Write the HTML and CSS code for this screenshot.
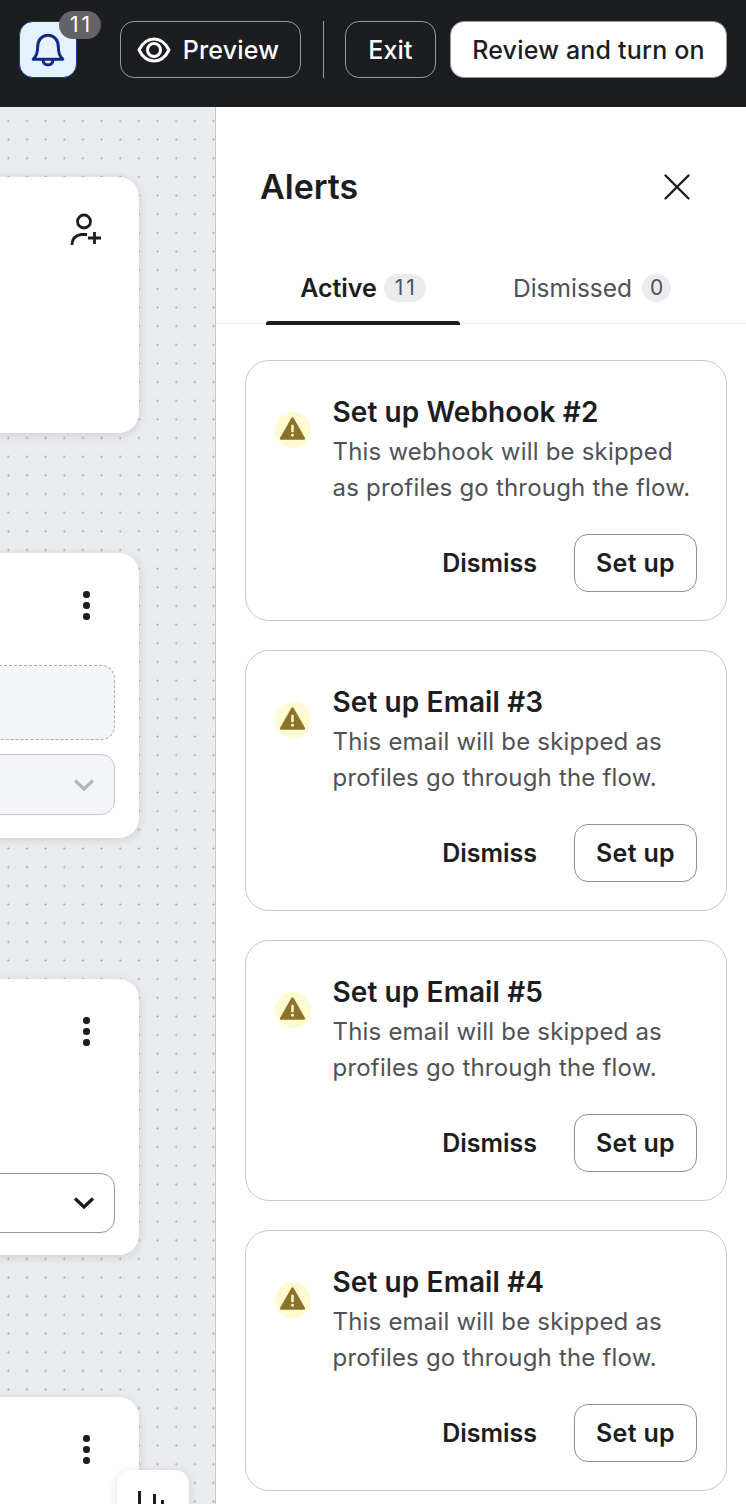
FILE: index.html
```html
<!DOCTYPE html>
<html lang="en">
<head>
<meta charset="UTF-8">
<title>Flow builder alerts</title>
<link rel="stylesheet" href="styles.css">
</head>
<body>
<header class="topbar">
  <div class="bell-wrap">
    <button class="bell-btn">
      <svg width="42" height="42" viewBox="0 2 34 34" fill="none" stroke="#0f2c84" stroke-width="2.400" stroke-linejoin="round" stroke-linecap="round"><path d="M5 26.500c2.800-2.600 3.600-5 3.600-9.500C8.600 11 12 7 17 7s8.400 4 8.400 10c0 4.500 .8 6.900 3.600 9.500Z"/><path d="M13 27c0 2.600 1.800 4 4 4s4-1.400 4-4"/></svg>
    </button>
    <span class="bell-count">11</span>
  </div>
  <button class="btn-dark btn-preview">
    <svg width="36" height="36" viewBox="0 0 36 36" fill="none" stroke="#fff" stroke-width="3" stroke-linejoin="round"><path d="M3 18C6.500 11 11.500 7 18 7s11.500 4 15 11c-3.500 7-8.500 11-15 11S6.500 25 3 18Z"/><circle cx="18" cy="18" r="6.500"/></svg>
    Preview
  </button>
  <span class="divider"></span>
  <button class="btn-dark btn-exit">Exit</button>
  <button class="btn-light">Review and turn on</button>
</header>

<main class="workspace">
  <section class="canvas">
    <div class="node node-trigger">
      <svg class="node-icon" width="34" height="34" viewBox="0 0 34 34" fill="none" stroke="#1c1d20" stroke-width="2.800"><circle cx="15" cy="9.500" r="6.500"/><path d="M3 33c0-6 3-9.500 9-10.500h6"/><path d="M19 26h13M25.500 20v12"/></svg>
    </div>
    <div class="node node-email">
      <div class="menu-dots"><i></i><i></i><i></i></div>
      <div class="placeholder"></div>
      <div class="select select-off">
        <svg width="22" height="14" viewBox="0 0 22 14" fill="none" stroke="#b4b5bb" stroke-width="3.200"><path d="M2 2.500l9 8.500 9-8.500"/></svg>
      </div>
    </div>
    <div class="node node-webhook">
      <div class="menu-dots"><i></i><i></i><i></i></div>
      <div class="select select-on">
        <svg width="22" height="14" viewBox="0 0 22 14" fill="none" stroke="#1c1d20" stroke-width="3.200"><path d="M2 2.500l9 8.500 9-8.500"/></svg>
      </div>
    </div>
    <div class="node node-last">
      <div class="menu-dots"><i></i><i></i><i></i></div>
    </div>
    <div class="zoom-tool">
      <span class="bar bar-a"></span><span class="bar bar-b"></span><span class="bar bar-c"></span>
    </div>
  </section>

  <aside class="panel">
    <div class="panel-head">
      <h1>Alerts</h1>
      <svg width="28" height="28" viewBox="0 0 28 28" fill="none" stroke="#1c1d20" stroke-width="2.400" stroke-linecap="round"><path d="M2.500 2.500l23 23M25.500 2.500l-23 23"/></svg>
    </div>
    <nav class="tabs">
      <div class="tab tab-active">Active <span class="pill pill-wide">11</span></div>
      <div class="tab">Dismissed <span class="pill">0</span></div>
    </nav>
    <div class="alerts">
      <article class="alert">
        <span class="warn"><svg width="25" height="23" viewBox="0 0 26 24"><path d="M13 1.500 25 22.500H1Z" fill="#8c722b" stroke="#8c722b" stroke-width="2.500" stroke-linejoin="round"/><rect x="11.700" y="8" width="2.600" height="8" rx="1" fill="#fffbd0"/><circle cx="13" cy="19" r="1.500" fill="#fffbd0"/></svg></span>
        <div class="alert-body">
          <h2>Set up Webhook #2</h2>
          <p>This webhook will be skipped as profiles go through the flow.</p>
          <div class="alert-actions"><span class="dismiss">Dismiss</span><button class="setup">Set up</button></div>
        </div>
      </article>
      <article class="alert">
        <span class="warn"><svg width="25" height="23" viewBox="0 0 26 24"><path d="M13 1.500 25 22.500H1Z" fill="#8c722b" stroke="#8c722b" stroke-width="2.500" stroke-linejoin="round"/><rect x="11.700" y="8" width="2.600" height="8" rx="1" fill="#fffbd0"/><circle cx="13" cy="19" r="1.500" fill="#fffbd0"/></svg></span>
        <div class="alert-body">
          <h2>Set up Email #3</h2>
          <p>This email will be skipped as profiles go through the flow.</p>
          <div class="alert-actions"><span class="dismiss">Dismiss</span><button class="setup">Set up</button></div>
        </div>
      </article>
      <article class="alert">
        <span class="warn"><svg width="25" height="23" viewBox="0 0 26 24"><path d="M13 1.500 25 22.500H1Z" fill="#8c722b" stroke="#8c722b" stroke-width="2.500" stroke-linejoin="round"/><rect x="11.700" y="8" width="2.600" height="8" rx="1" fill="#fffbd0"/><circle cx="13" cy="19" r="1.500" fill="#fffbd0"/></svg></span>
        <div class="alert-body">
          <h2>Set up Email #5</h2>
          <p>This email will be skipped as profiles go through the flow.</p>
          <div class="alert-actions"><span class="dismiss">Dismiss</span><button class="setup">Set up</button></div>
        </div>
      </article>
      <article class="alert">
        <span class="warn"><svg width="25" height="23" viewBox="0 0 26 24"><path d="M13 1.500 25 22.500H1Z" fill="#8c722b" stroke="#8c722b" stroke-width="2.500" stroke-linejoin="round"/><rect x="11.700" y="8" width="2.600" height="8" rx="1" fill="#fffbd0"/><circle cx="13" cy="19" r="1.500" fill="#fffbd0"/></svg></span>
        <div class="alert-body">
          <h2>Set up Email #4</h2>
          <p>This email will be skipped as profiles go through the flow.</p>
          <div class="alert-actions"><span class="dismiss">Dismiss</span><button class="setup">Set up</button></div>
        </div>
      </article>
    </div>
  </aside>
</main>
</body>
</html>
```

FILE: styles.css
```css
* {
  box-sizing: border-box;
  font-family: Inter, "Noto Sans", sans-serif;
}
html, body {
  margin: 0;
  height: 1504px;
  overflow: hidden;
}
button {
  margin: 0;
  padding: 0;
  background: none;
  border: none;
  color: inherit;
  font-size: inherit;
  font-weight: inherit;
  letter-spacing: inherit;
}

/* top bar */
.topbar {
  display: flex;
  align-items: flex-start;
  height: 107px;
  padding: 21px 19px 0 19px;
  background-color: #1c1d20;
  color: #fff;
  font-size: 25px;
  font-weight: 500;
  letter-spacing: 0.2px;
}
.bell-wrap {
  position: relative;
  width: 58px;
  height: 57px;
  margin-right: 43px;
}
.bell-btn {
  display: flex;
  align-items: center;
  justify-content: center;
  width: 58px;
  height: 57px;
  background-color: #e4f1ff;
  border: 1.500px solid #1a3a9c;
  border-radius: 14px;
}
.bell-count {
  position: absolute;
  left: 40px;
  top: -10px;
  width: 42px;
  height: 28px;
  background-color: #636366;
  border-radius: 14px;
  font-size: 21px;
  font-weight: 400;
  line-height: 28px;
  letter-spacing: 3px;
  text-indent: 3px;
  text-align: center;
}
.btn-dark {
  display: flex;
  align-items: center;
  justify-content: center;
  height: 57px;
  border: 1px solid #98999d;
  border-radius: 14px;
}
.btn-preview {
  gap: 11px;
  width: 181px;
  padding-right: 6px;
}
.divider {
  width: 1px;
  height: 57px;
  margin: 0 21px 0 22px;
  background-color: #98999d;
}
.btn-exit {
  width: 91px;
  margin-right: 14px;
}
.btn-light {
  width: 277px;
  height: 57px;
  background-color: #fff;
  color: #1c1d20;
  border: 1px solid #98999d;
  border-radius: 14px;
}

/* flow canvas */
.workspace {
  display: flex;
  height: 1397px;
}
.canvas {
  position: relative;
  width: 216px;
  overflow: hidden;
  background-color: #ebecef;
  background-image: radial-gradient(circle, #a9aab0 0.800px, transparent 1.300px);
  background-size: 18.667px 18.667px;
  background-position: -1px 4.600px;
  border-right: 1px solid #c8c9d0;
}
.node {
  position: absolute;
  left: -100px;
  width: 239px;
  background-color: #fff;
  border-radius: 20px;
  box-shadow: 0 2px 10px rgba(28, 29, 32, 0.14);
}
.node-trigger {
  top: 70px;
  height: 256px;
}
.node-email {
  top: 446px;
  height: 285px;
}
.node-webhook {
  top: 872px;
  height: 276px;
}
.node-last {
  top: 1290px;
  height: 300px;
}
.node-icon {
  position: absolute;
  left: 169px;
  top: 35px;
}
.menu-dots {
  position: absolute;
  left: 183px;
  top: 38px;
  display: flex;
  flex-direction: column;
  gap: 4.500px;
}
.menu-dots i {
  display: block;
  width: 6.500px;
  height: 6.500px;
  background-color: #1c1d20;
  border-radius: 50%;
}
.placeholder {
  position: absolute;
  left: 0;
  top: 112px;
  width: 215px;
  height: 75px;
  background-color: #f4f5f7;
  border: 1px dashed #a9aab0;
  border-radius: 14px;
}
.select {
  position: absolute;
  left: 0;
  width: 215px;
  height: 61px;
  border-radius: 14px;
  display: flex;
  align-items: center;
  justify-content: flex-end;
  padding-right: 19px;
}
.select-off {
  top: 201px;
  background-color: #f4f5f7;
  border: 1px solid #c8c9d0;
}
.select-on {
  top: 194px;
  height: 60px;
  background-color: #fff;
  border: 1px solid #98999d;
}
.zoom-tool {
  position: absolute;
  left: 117px;
  top: 1363px;
  width: 72px;
  height: 60px;
  background-color: #fff;
  border-radius: 14px;
  box-shadow: 0 2px 10px rgba(28, 29, 32, 0.14);
}
.bar {
  position: absolute;
  width: 3px;
  background-color: #1c1d20;
}
.bar-a {
  left: 21px;
  top: 21px;
  height: 30px;
}
.bar-b {
  left: 36px;
  top: 24px;
  height: 30px;
}
.bar-c {
  left: 44px;
  top: 30px;
  height: 30px;
}

/* alerts panel */
.panel {
  flex: 1;
  background-color: #fff;
  color: #1c1d20;
}
.panel-head {
  display: flex;
  align-items: center;
  justify-content: space-between;
  height: 159px;
  padding: 0 55px 0 44px;
}
.panel-head h1 {
  margin: 0;
  font-size: 34px;
  font-weight: 600;
}
.tabs {
  display: flex;
  height: 58px;
  padding-left: 50px;
  border-bottom: 1.500px solid #ebecef;
}
.tab {
  position: relative;
  display: flex;
  align-items: center;
  justify-content: center;
  gap: 7px;
  width: 194px;
  height: 44px;
  font-size: 24.500px;
  color: #505155;
}
.tab-active {
  font-size: 25px;
  font-weight: 600;
  color: #1c1d20;
}
.tab-active::after {
  content: "";
  position: absolute;
  left: 0;
  right: 0;
  top: 55px;
  height: 4px;
  background-color: #1c1d20;
  border-radius: 3px 3px 0 0;
}
.tab + .tab {
  margin-left: 35px;
  gap: 10px;
}
.pill {
  display: inline-block;
  width: 29px;
  height: 28px;
  background-color: #ebecef;
  border-radius: 14px;
  color: #505155;
  font-size: 21px;
  font-weight: 400;
  line-height: 28px;
  text-align: center;
}
.pill-wide {
  width: 42px;
  letter-spacing: 3px;
  text-indent: 3px;
}
.alerts {
  display: flex;
  flex-direction: column;
  gap: 29px;
  padding: 36px 19px 0 29px;
}
.alert {
  display: flex;
  gap: 21.500px;
  height: 261px;
  padding: 32px 29px 0 29px;
  border: 1px solid #c8c9d0;
  border-radius: 24px;
}
.warn {
  display: flex;
  align-items: center;
  justify-content: center;
  flex: none;
  width: 36px;
  height: 36px;
  margin-top: 19px;
  background-color: #fffbd0;
  border-radius: 50%;
}
.warn svg {
  margin: 0 1px 3px 0;
}
.alert-body {
  flex: 1;
}
.alert h2 {
  margin: 0 0 3px 0;
  font-size: 28px;
  font-weight: 600;
  line-height: 38px;
  letter-spacing: 0.1px;
}
.alert p {
  margin: 0;
  font-size: 24px;
  line-height: 36px;
  letter-spacing: 0.2px;
  color: #505155;
}
.alert-actions {
  display: flex;
  align-items: center;
  justify-content: flex-end;
  gap: 37px;
  margin-top: 28px;
}
.dismiss {
  font-size: 25px;
  font-weight: 600;
}
.setup {
  width: 123px;
  height: 58px;
  border: 1px solid #8e8f94;
  border-radius: 14px;
  font-size: 25px;
  font-weight: 600;
  letter-spacing: 0.3px;
}
```
